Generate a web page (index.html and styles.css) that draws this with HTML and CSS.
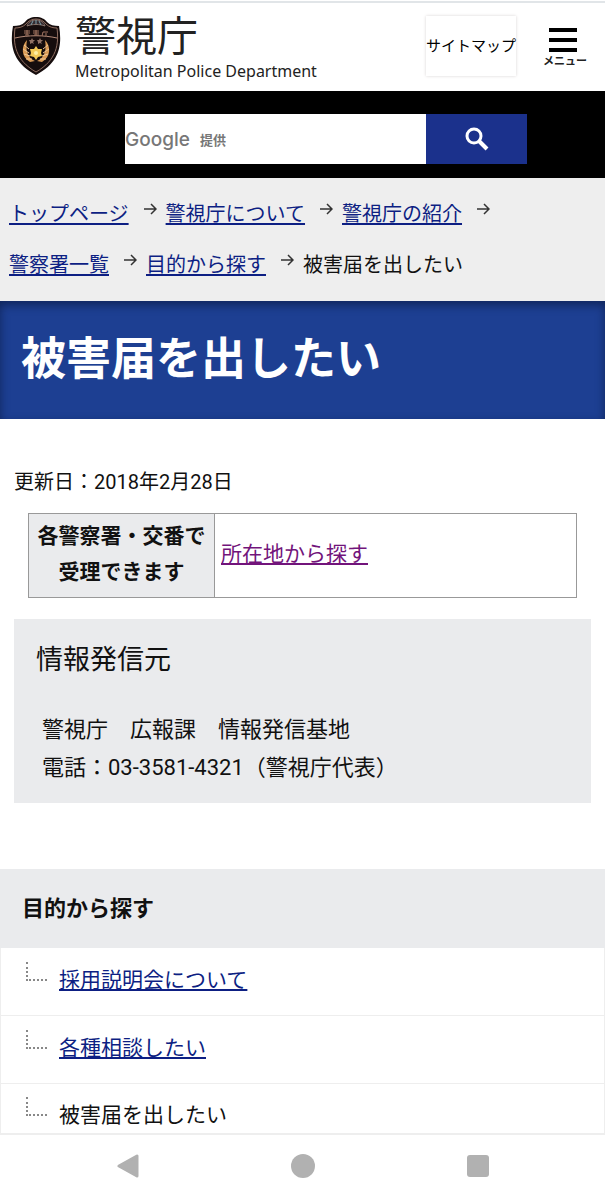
FILE: index.html
```
<!DOCTYPE html>
<html lang="ja">
<head>
  <meta charset="UTF-8">
  <meta name="viewport" content="width=device-width, initial-scale=1">
  <title>被害届を出したい 警視庁</title>
  <link rel="stylesheet" href="styles.css">
</head>
<body>
  <header class="header">
    <a class="logo" href="#">
      <svg class="emblem" viewBox="0 0 50 60" width="50" height="60" aria-hidden="true">
        <path d="M25 1c-5 0-9 2-11 5C11 9 7 10 2 10c-3 17-2 36 23 49C50 46 51 27 48 10c-5 0-9-1-12-4-2-3-6-5-11-5z" fill="#160d0d"/>
        <path d="M25 3c-4 0-8 2-10 5-3 3-7 4-11 4C2 28 4 44 25 56 46 44 48 28 46 12c-4 0-8-1-11-4-2-3-6-5-10-5z" fill="none" stroke="#8f6d60" stroke-width="1"/>
        <path d="M16 10c2-8 16-8 18 0-5-2-13-2-18 0z" fill="#342b30" stroke="#88746c" stroke-width="1"/>
        <path d="M20 9l2-4M25 8V4M30 9l-2-4" stroke="#7da0aa" stroke-width="1"/>
        <path d="M4 22c13-3 29-3 42 0" fill="none" stroke="#b58b79" stroke-width="1"/>
        <path d="M13 15h6M13 17h6M14 19h4M16 14v5M22 15h6M22 17h6M23 19h5M25 14v5M32 16h5M32 16l-1 4M35 17v3" stroke="#a17461" stroke-width="1"/>
        <path d="M21 22l1 2 2 0-2 2 1 2-2-1-2 1 0-2-1-2h2zM29 22l1 2 2 0-2 2 1 2-2-1-2 1 0-2-1-2h2z" fill="#907265"/>
        <path d="M16 24c-6 6-6 17 3 22l5-1c-7-3-10-10-8-21zM34 24c6 6 6 17-3 22l-5-1c7-3 10-10 8-21z" fill="#d99a55"/>
        <path d="M13 29l5 4M12 33l6 4M13 38l6 2M15 43l6 0M37 29l-5 4M38 33l-6 4M37 38l-6 2M35 43l-6 0" stroke="#f0c795" stroke-width="1"/>
        <path d="M25 30l2 3 4 0-1 4 1 3-4 1-2 3-2-3-4-1 1-3-1-4 4 0z" fill="#f3c957"/>
        <circle cx="25" cy="37" r="2" fill="#fff0a4"/>
      </svg>
      <span class="logo-text">
        <span class="logo-ja">警視庁</span>
        <span class="logo-en">Metropolitan Police Department</span>
      </span>
    </a>
    <a class="sitemap" href="#">サイトマップ</a>
    <button class="menu" type="button">
      <svg viewBox="0 0 28 24" width="28" height="24" aria-hidden="true">
        <path d="M0 2h28M0 12h28M0 22h28" stroke="#000" stroke-width="4"/>
      </svg>
      メニュー
    </button>
  </header>

  <form class="search">
    <div class="search-box">
      <input id="q" class="search-input" type="text">
      <label class="search-label" for="q"><span class="google">Google</span>提供</label>
    </div>
    <button class="search-button" type="button" aria-label="検索">
      <svg viewBox="0 0 24 24" width="24" height="24" aria-hidden="true">
        <circle cx="9" cy="9" r="7" fill="none" stroke="#fff" stroke-width="3"/>
        <path d="M14 14l8 8" stroke="#fff" stroke-width="4"/>
      </svg>
    </button>
  </form>

  <nav aria-label="現在位置">
    <ol class="breadcrumb">
      <li><a href="#">トップページ</a><svg class="arrow" viewBox="0 0 14 12" aria-hidden="true"><path d="M1 6h12M8 1l5 5-5 5"/></svg></li>
      <li><a href="#">警視庁について</a><svg class="arrow" viewBox="0 0 14 12" aria-hidden="true"><path d="M1 6h12M8 1l5 5-5 5"/></svg></li>
      <li><a href="#">警視庁の紹介</a><svg class="arrow" viewBox="0 0 14 12" aria-hidden="true"><path d="M1 6h12M8 1l5 5-5 5"/></svg></li>
      <li><a href="#">警察署一覧</a><svg class="arrow" viewBox="0 0 14 12" aria-hidden="true"><path d="M1 6h12M8 1l5 5-5 5"/></svg></li>
      <li><a href="#">目的から探す</a><svg class="arrow" viewBox="0 0 14 12" aria-hidden="true"><path d="M1 6h12M8 1l5 5-5 5"/></svg></li>
      <li>被害届を出したい</li>
    </ol>
  </nav>

  <main>
    <h1>被害届を出したい</h1>
    <div class="content">
      <p class="update">更新日：2018年2月28日</p>
      <table class="info">
        <tr>
          <th scope="row">各警察署・交番で<br>受理できます</th>
          <td><a class="visited" href="#">所在地から探す</a></td>
        </tr>
      </table>
      <section class="contact">
        <h2>情報発信元</h2>
        <p>警視庁　広報課　情報発信基地<br>電話：03-3581-4321（警視庁代表）</p>
      </section>
    </div>
  </main>

  <nav class="local">
    <h2>目的から探す</h2>
    <ul>
      <li><a href="#">採用説明会について</a></li>
      <li><a href="#">各種相談したい</a></li>
      <li>被害届を出したい</li>
    </ul>
  </nav>

  <footer class="device-nav">
    <button type="button" aria-label="戻る">
      <svg viewBox="0 0 24 24" width="24" height="24"><path d="M3 12L21 2v20z" fill="#b1b1b1" stroke="#b1b1b1" stroke-width="3" stroke-linejoin="round"/></svg>
    </button>
    <button type="button" aria-label="ホーム">
      <svg viewBox="0 0 24 24" width="24" height="24"><circle cx="12" cy="12" r="12" fill="#b1b1b1"/></svg>
    </button>
    <button type="button" aria-label="履歴">
      <svg viewBox="0 0 24 24" width="24" height="24"><rect x="1" y="1" width="22" height="22" rx="3" fill="#b1b1b1"/></svg>
    </button>
  </footer>
</body>
</html>
```
FILE: styles.css
```
* {
  box-sizing: border-box;
}
body {
  margin: 0;
  background-color: #fff;
  color: #111;
  font-size: 21px;
  font-family: Roboto, "Noto Sans CJK JP", sans-serif;
}
h1, h2, p, ul, ol {
  margin: 0;
  padding: 0;
}
ul, ol {
  list-style: none;
}
a {
  color: #0d1f83;
  text-underline-offset: 2px;
}
button {
  border: none;
  padding: 0;
  background: none;
  font-family: inherit;
  cursor: pointer;
}

/* header */
.header {
  display: flex;
  align-items: flex-start;
  margin-top: 1px;
  border-top: 2px solid #e1e5e8;
  padding: 13px 18px 0 11px;
  height: 90px;
}
.logo {
  display: flex;
  gap: 14px;
  margin-right: auto;
  color: #222;
  text-decoration: none;
}
.emblem {
  flex: none;
}
.logo-ja, .logo-en {
  display: block;
}
.logo-ja {
  font-size: 41px;
  line-height: 43px;
}
.logo-en {
  font-family: "Noto Sans", sans-serif;
  font-size: 16px;
  line-height: 24px;
}
.sitemap {
  margin-right: 27px;
  width: 90px;
  color: #000;
  font-size: 15px;
  line-height: 60px;
  text-align: center;
  text-decoration: none;
  white-space: nowrap;
  box-shadow: 0 0 3px #d8d4d4;
}
.menu {
  display: flex;
  flex-direction: column;
  align-items: center;
  padding-top: 12px;
  color: #222;
  font-size: 11px;
  font-weight: bold;
  line-height: 20px;
}
.menu svg {
  margin-right: 4px;
}

/* search */
.search {
  display: flex;
  padding: 23px 78px 14px 125px;
  background-color: #000;
}
.search-box {
  position: relative;
  flex: 1;
}
.search-input {
  display: block;
  border: none;
  padding: 0 4px;
  width: 100%;
  height: 50px;
  font-size: 20px;
}
.search-label {
  display: flex;
  align-items: center;
  gap: 10px;
  position: absolute;
  top: 0;
  left: 0;
  height: 50px;
  color: #777;
  font-size: 13px;
  font-weight: bold;
  pointer-events: none;
}
.google {
  font-family: Inter, sans-serif;
  font-size: 19px;
  font-weight: 500;
}
.search-input:focus + .search-label {
  display: none;
}
.search-button {
  width: 101px;
  background-color: #1b318c;
}
.search-button svg {
  display: block;
  margin: 0 auto;
}

/* breadcrumb */
.breadcrumb {
  display: flex;
  flex-wrap: wrap;
  padding: 11px 9px 10px;
  background-color: #eee;
  font-size: 20px;
  line-height: 51px;
}
.arrow {
  margin: 0 9px 0 14px;
  width: 14px;
  height: 12px;
  vertical-align: 6px;
  fill: none;
  stroke: #333;
  stroke-width: 1.5;
}

/* main */
h1 {
  padding: 26px 21px 26px;
  background-color: #1d3f92;
  box-shadow: inset 0 4px 10px #10265c;
  color: #fff;
  font-size: 45px;
  line-height: 66px;
}
.content {
  padding: 45px 14px 66px;
}
.update {
  font-size: 20px;
  line-height: 36px;
}
.info {
  margin: 13px auto 21px;
  width: calc(100% - 28px);
  border-collapse: collapse;
  line-height: 36px;
}
.info th, .info td {
  border: 1px solid #999;
  padding: 4px 6px 7px;
}
.info th {
  width: 186px;
  padding: 4px 0 7px;
  background-color: #eaebed;
}
.visited {
  color: #72147b;
}
.contact {
  padding: 22px 22px 16px;
  background-color: #eaebed;
}
.contact h2 {
  margin-bottom: 32px;
  font-size: 27px;
  font-weight: normal;
  line-height: 38px;
}
.contact p {
  padding-left: 6px;
  font-size: 22px;
  line-height: 38px;
}

/* local menu */
.local h2 {
  padding: 0 22px;
  background-color: #eaebed;
  font-size: 22px;
  line-height: 79px;
}
.local li {
  display: flex;
  border: 1px solid #eee;
  border-top: none;
  padding: 14px 25px 17px;
  line-height: 36px;
}
.local li:last-child {
  border-bottom-width: 2px;
  padding-top: 13px;
  padding-bottom: 0;
}
.local li::before {
  content: "";
  margin-right: 12px;
  width: 19px;
  height: 17px;
  border-bottom: 2px dotted #888;
  border-left: 2px dotted #888;
}

/* bottom buttons */
.device-nav {
  display: flex;
  justify-content: center;
  gap: 151px;
  padding: 19px 0;
}
.device-nav svg {
  display: block;
}
```
